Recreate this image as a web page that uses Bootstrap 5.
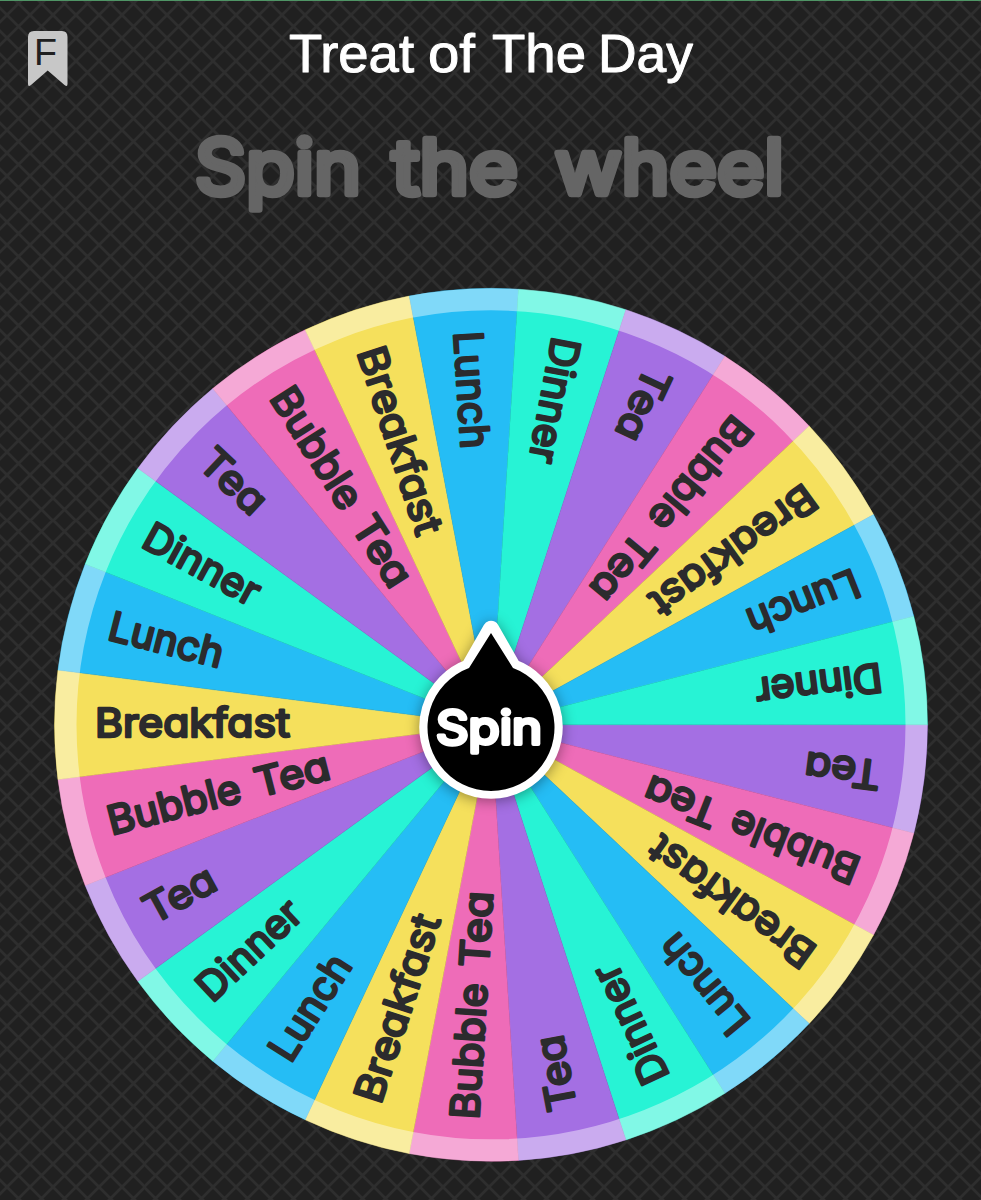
<!DOCTYPE html>
<html lang="en">
<head>
<meta charset="utf-8">
<meta name="viewport" content="width=device-width, initial-scale=1">
<title>Treat of The Day</title>
<link href="https://cdn.jsdelivr.net/npm/bootstrap@5.3.0/dist/css/bootstrap.min.css" rel="stylesheet">
<style>
  body { background: #202020; font-family: "Inter", sans-serif; }
  .spinner-page {
    width: 981px; height: 1200px; border-top: 1px solid #4f9465;
    background: url("data:image/svg+xml,%3Csvg xmlns='http://www.w3.org/2000/svg' width='22.98' height='22.98' viewBox='0 0 23 23'%3E%3Cpath d='M-2-2L25 25M25-2L-2 25M-2 2L2-2M21 25L25 21M-2 21L2 25M21-2L25 2' stroke='%232e2e2e' stroke-width='2.7'/%3E%3C/svg%3E") 6.7px 14.2px / 22.98px 22.98px #202020;
  }
  .title-row { height: 109px; }
  .bookmark { margin: 29px 0 0 27px; }
  .prompt-row { height: 130px; }
  svg { display: block; }
  svg text { font-family: "Inter", sans-serif; font-feature-settings: "cv11"; stroke-linejoin: round; stroke-linecap: round; }
  svg .title-text text { font-family: "Liberation Sans", sans-serif; font-size: 54px; fill: #fff; stroke: #fff; stroke-width: 1; }
  svg .flag-text { font-family: "Liberation Sans", sans-serif; font-size: 37px; fill: #202020; }
  .prompt-text { font-size: 75px; font-weight: 400; fill: #656565; stroke: #656565; stroke-width: 6.5; }
  .slice-text { font-size: 40px; font-weight: 400; fill: #2b2b2d; stroke: #2b2b2d; stroke-width: 2.6; }
  .hub-text { font-size: 46px; font-weight: 400; fill: #fff; stroke: #fff; stroke-width: 4; }
  .hub { filter: drop-shadow(0 2px 7px rgba(0,0,0,.4)); cursor: pointer; }
</style>
</head>
<body>
<main class="spinner-page d-flex flex-column overflow-hidden">
  <header class="title-row d-flex align-items-start">
    <svg class="bookmark flex-shrink-0" width="42" height="58" viewBox="27 30 42 58" aria-label="Bookmark">
      <path d="M34 31H62Q67.500 31 67.500 37V84Q67.500 87.500 64.500 85L47.700 70.500L31 85Q28 87.500 28 84V37Q28 31 34 31Z" fill="#c7c7c7"/>
      <text class="flag-text" x="34" y="65" textLength="23" lengthAdjust="spacingAndGlyphs">F</text>
    </svg>
    <svg class="flex-shrink-0" width="912" height="109" viewBox="69 1 912 109">
      <g class="title-text">
        <text x="289" y="71.500" textLength="125" lengthAdjust="spacingAndGlyphs">Treat</text>
        <text x="428" y="71.500" textLength="47" lengthAdjust="spacingAndGlyphs">of</text>
        <text x="492" y="71.500" textLength="94" lengthAdjust="spacingAndGlyphs">The</text>
        <text x="598" y="71.500" textLength="95" lengthAdjust="spacingAndGlyphs">Day</text>
      </g>
    </svg>
  </header>
  <section class="prompt-row">
    <svg width="981" height="130" viewBox="0 110 981 130">
      <g class="prompt-text">
        <text x="195" y="193.500" textLength="166" lengthAdjust="spacingAndGlyphs">Spin</text>
        <text x="392" y="193.500" textLength="126" lengthAdjust="spacingAndGlyphs">the</text>
        <text x="555" y="193.500" textLength="229" lengthAdjust="spacingAndGlyphs">wheel</text>
      </g>
    </svg>
  </section>
  <section>
    <svg width="981" height="960" viewBox="0 240 981 960">
      <g id="slices"></g>
      <circle cx="491" cy="724.800" r="425.500" fill="none" stroke="#fff" stroke-opacity=".42" stroke-width="22"/>
      <g id="labels" class="slice-text"></g>
      <g class="hub">
        <path d="M491 629L513 667.500A63.500 63.500 0 1 1 469 667.500Z" fill="#000" stroke="#fff" stroke-width="16.500" stroke-linejoin="round"/>
        <path d="M491 633L513 668A63.500 63.500 0 1 1 469 668Z" fill="#000"/>
        <text class="hub-text" x="436" y="743.500" textLength="106" lengthAdjust="spacingAndGlyphs">Spin</text>
      </g>
    </svg>
  </section>
</main>
<script src="https://cdn.jsdelivr.net/npm/bootstrap@5.3.0/dist/js/bootstrap.bundle.min.js"></script>
<script>
  const treats = [
    { color: '#a46fe3', start: 392.5, words: [['Tea', 0, 76]] },
    { color: '#ee6cb8', start: 395, words: [['Bubble', 0, 136], ['Tea', 152, 76]] },
    { color: '#f5e05c', start: 396, words: [['Breakfast', 0, 195]] },
    { color: '#25bdf5', start: 394, words: [['Lunch', 0, 117]] },
    { color: '#27f3d5', start: 394, words: [['Dinner', 0, 127]] }
  ];
  const cx = 491, cy = 724.8, r = 436.5, step = 360 / 25;
  const pt = a => [cx + r * Math.cos(a * Math.PI / 180), cy + r * Math.sin(a * Math.PI / 180)].map(v => v.toFixed(2)).join(' ');
  let slices = '', labels = '';
  for (let i = 0; i < 25; i++) {
    const t = treats[i % 5], a = i * step;
    slices += `<path d="M${cx} ${cy}L${pt(a)}A${r} ${r} 0 0 1 ${pt(a + step)}Z" fill="${t.color}" stroke="${t.color}" stroke-width=".4"/>`;
    labels += `<g transform="translate(${cx} ${cy}) rotate(${a + step / 2 - 180})">` +
      t.words.map(w => `<text x="${w[1] - t.start}" y="12.5" textLength="${w[2]}" lengthAdjust="spacingAndGlyphs">${w[0]}</text>`).join('') + '</g>';
  }
  document.getElementById('slices').innerHTML = slices;
  document.getElementById('labels').innerHTML = labels;
</script>
</body>
</html>
